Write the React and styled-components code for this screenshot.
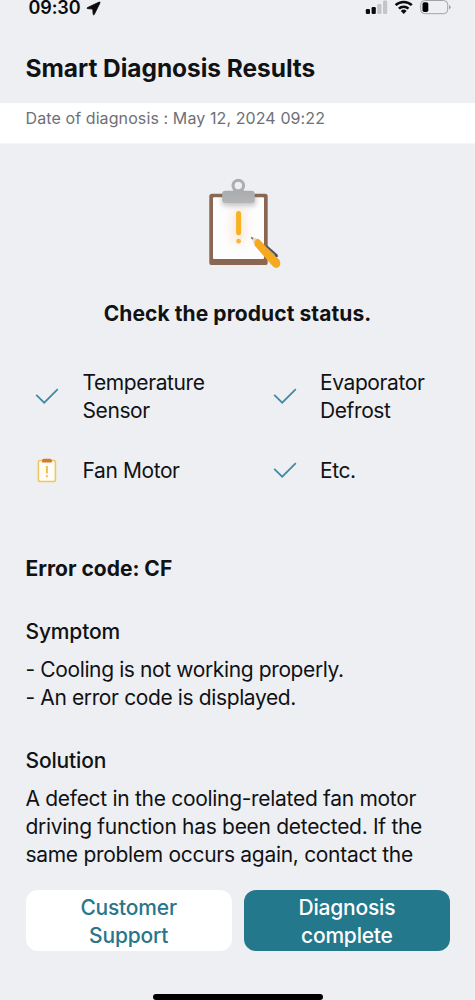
import React from "react";
import styled, { createGlobalStyle } from "styled-components";

const GlobalStyle = createGlobalStyle`
  *, *::before, *::after { box-sizing: border-box; }
  body {
    margin: 0;
    background: #eeeff3;
    font-family: Inter, "Liberation Sans", sans-serif;
    color: #111214;
  }
  h1, h2, h3, p { margin: 0; }
`;

const Screen = styled.div`
  display: flex;
  flex-direction: column;
  width: 475px;
  height: 1000px;
  overflow: hidden;
  background: #eeeff3;
`;

const StatusBar = styled.header`
  display: flex;
  align-items: flex-start;
  justify-content: space-between;
  flex: none;
  height: 53px;
  padding: 0 24px 0 28.5px;
`;

const Clock = styled.div`
  display: flex;
  align-items: center;
  gap: 6px;
  height: 16px;
  font-size: 18px;
  line-height: 16px;
  font-weight: 600;
  letter-spacing: -0.1px;
  color: #0b0b0c;
`;

const Indicators = styled.div`
  display: flex;
  height: 16px;
`;

const Title = styled.h1`
  flex: none;
  height: 50px;
  padding-left: 25.5px;
  font-size: 24.5px;
  line-height: 31px;
  font-weight: 700;
  letter-spacing: -0.05px;
  white-space: nowrap;
`;

const DateStrip = styled.p`
  flex: none;
  height: 41px;
  padding-left: 25.5px;
  background: #fff;
  border-bottom: 1px solid #f4f5f7;
  font-size: 16px;
  line-height: 30px;
  letter-spacing: 0.1px;
  color: #6d7077;
  white-space: nowrap;
`;

const Hero = styled.section`
  display: flex;
  flex-direction: column;
  align-items: center;
  flex: none;
  height: 224px;
  padding-top: 31px;
`;

const HeroTitle = styled.h2`
  margin-top: 29px;
  font-size: 21px;
  line-height: 28px;
  font-weight: 700;
  letter-spacing: 0.08px;
  white-space: nowrap;
`;

const CheckGrid = styled.ul`
  display: grid;
  grid-template-columns: 237.5px 200px;
  row-gap: 32px;
  flex: none;
  height: 187px;
  align-content: start;
  margin: 0;
  padding: 1px 0 0 33px;
  list-style: none;
`;

const CheckItem = styled.li`
  display: flex;
  align-items: center;
  gap: 21.5px;
`;

const BodyText = styled.p`
  font-size: 21px;
  line-height: 28px;
  letter-spacing: ${(p) => p.$track ?? -0.3}px;
  white-space: nowrap;
`;

const Details = styled.main`
  flex: none;
  height: 335px;
  padding-left: 25.5px;
`;

const ErrorCode = styled.h2`
  font-size: 21px;
  line-height: 28px;
  font-weight: 700;
  letter-spacing: 0;
`;

const Block = styled.section`
  margin-top: 35px;
`;

const BlockTitle = styled.h3`
  margin-bottom: 10px;
  font-size: 21px;
  line-height: 28px;
  font-weight: 500;
  letter-spacing: -0.15px;
`;

const Actions = styled.footer`
  display: grid;
  grid-template-columns: 1fr 1fr;
  gap: 12px;
  flex: none;
  height: 61px;
  margin: 0 25px 0 25.5px;
`;

const Button = styled.button`
  height: 61px;
  padding: 2px 0 0;
  border: 0;
  border-radius: 12px;
  background: ${(p) => (p.$primary ? "#23788c" : "#fff")};
  color: ${(p) => (p.$primary ? "#fff" : "#28768a")};
  font-family: inherit;
  font-size: 21px;
  line-height: 28px;
  font-weight: 500;
  letter-spacing: -0.2px;
`;

const HomeIndicator = styled.div`
  flex: none;
  width: 170px;
  height: 6.5px;
  margin: 42.5px 0 0 153px;
  border-radius: 4px;
  background: #000;
`;

const LocationArrow = () => (
  <svg width="15" height="15" viewBox="0 0 15 15">
    <path d="M13.2 1.1 1.3 6.7q-.7.5.1.9l5.4.4.4 5.4q.5.9 1 .1L14 1.8q.2-.9-.8-.7Z" fill="#0b0b0c" stroke="#0b0b0c" strokeWidth=".9" strokeLinejoin="round" />
  </svg>
);

const StatusIcons = () => (
  <svg width="86" height="16" viewBox="365 0 86 16">
    <rect x="365.8" y="9" width="4.2" height="5" rx="1.2" fill="#0b0b0c" />
    <rect x="371.6" y="7" width="4.2" height="7" rx="1.2" fill="#0b0b0c" />
    <rect x="377.3" y="4" width="4.2" height="10" rx="1.2" fill="#c4c5c9" />
    <rect x="383" y="0.6" width="4.2" height="13.4" rx="1.2" fill="#c4c5c9" />
    <g fill="none" stroke="#0b0b0c" strokeWidth="2.5">
      <path d="M395.6 5.2a11.6 11.6 0 0 1 16.2 0" />
      <path d="M398.9 8.7a6.8 6.8 0 0 1 9.6 0" />
    </g>
    <path d="M403.7 13.9 400.8 11a4.1 4.1 0 0 1 5.8 0Z" fill="#0b0b0c" />
    <rect x="420.7" y="0.5" width="27" height="13.2" rx="4" fill="none" stroke="#a1a2a6" />
    <rect x="422.5" y="2.3" width="5.8" height="9.8" rx="1.8" fill="#000" />
    <path d="M449.2 5v4.4q1.4-.7 1.4-2.2t-1.4-2.2Z" fill="#8f9095" />
  </svg>
);

const ClipboardArt = () => (
  <svg width="110" height="96" viewBox="183 175 110 96">
    <defs>
      <filter id="soft" x="-50%" y="-50%" width="200%" height="200%">
        <feGaussianBlur stdDeviation="2.5" />
      </filter>
      <filter id="glow" x="-300%" y="-50%" width="700%" height="200%">
        <feGaussianBlur stdDeviation="5" />
      </filter>
      <linearGradient id="clip" x1="0" y1="0" x2="0" y2="1">
        <stop offset="0" stopColor="#aaabad" />
        <stop offset="1" stopColor="#b4b5b7" />
      </linearGradient>
      <clipPath id="paper"><rect x="213" y="197" width="51" height="62" /></clipPath>
    </defs>
    <rect x="209.3" y="193.7" width="58.4" height="71.3" rx="2.6" fill="#8a6753" />
    <rect x="213" y="197.3" width="51" height="61.7" rx="1" fill="#fdfdfe" />
    <g clipPath="url(#paper)">
      <rect x="231" y="207" width="15" height="38" rx="7" fill="#f9dcc4" opacity=".5" filter="url(#glow)" />
      <rect x="222" y="195" width="34" height="11" rx="3" fill="#999" opacity=".55" filter="url(#soft)" />
    </g>
    <circle cx="238.3" cy="185.6" r="5.2" fill="none" stroke="#adaeb0" strokeWidth="3.3" />
    <path d="M233 188h10.6v5H233Z" fill="#adaeb0" />
    <circle cx="238.3" cy="185.6" r="3.6" fill="#eeeff3" />
    <rect x="222.2" y="190.8" width="32.5" height="12.2" rx="3" fill="url(#clip)" />
    <rect x="236.1" y="211" width="5" height="24.2" rx="2.5" fill="#f8b11f" />
    <circle cx="238.6" cy="241.2" r="2.4" fill="#f9b443" />
    <path d="M266.3 246 276.8 255.3" stroke="#505155" strokeWidth="2" fill="none" />
    <path d="m273 256.7 4.8-1" stroke="#505155" strokeWidth="2.4" fill="none" />
    <path d="M253.5 238.2 258.5 239.2 279.4 260.6Q281.6 264.5 278.7 266.9Q276 269.3 272.8 266.3L254.6 245.6Z" fill="#f6a91f" />
    <path d="M258.5 239.2 279.4 260.6" stroke="#dc9622" strokeWidth=".8" />
    <path d="m251.4 237.5 6.2 1.3q-3.2 1.2-3.6 5.1Z" fill="#ead9c7" />
    <path d="m250.8 237 2.8.8-1.6 2Z" fill="#5b5654" />
  </svg>
);

const CheckIcon = () => (
  <svg width="28" height="28" viewBox="0 0 28 28">
    <path d="m3.2 11.8 8 7.9L24.8 6.1" fill="none" stroke="#3b8ca2" strokeWidth="1.7" />
  </svg>
);

const WarningIcon = () => (
  <svg width="28" height="28" viewBox="0 0 28 28">
    <rect x="5.4" y="3.5" width="17" height="21" rx="1.8" fill="#fffdf6" stroke="#f2c65a" strokeWidth="1.6" />
    <path d="M9 5.6V3.6Q9 1.8 10.8 1.8h6.2q1.8 0 1.8 1.8v2Z" fill="#d27b2b" />
    <path d="M13.9 9v7.5M13.9 18.2v2" stroke="#efc04f" strokeWidth="2" />
  </svg>
);

const checks = [
  { lines: ["Temperature", "Sensor"], ok: true },
  { lines: ["Evaporator", "Defrost"], ok: true },
  { lines: ["Fan Motor"], ok: false },
  { lines: ["Etc."], ok: true },
];

const Lines = ({ items }) =>
  items.map((line, i) => (
    <React.Fragment key={line}>
      {i > 0 && <br />}
      {line}
    </React.Fragment>
  ));

export default function App() {
  return (
    <Screen>
      <GlobalStyle />
      <StatusBar>
        <Clock><span>09:30</span><LocationArrow /></Clock>
        <Indicators><StatusIcons /></Indicators>
      </StatusBar>
      <Title>Smart Diagnosis Results</Title>
      <DateStrip>Date of diagnosis : May 12, 2024 09:22</DateStrip>
      <Hero>
        <ClipboardArt />
        <HeroTitle>Check the product status.</HeroTitle>
      </Hero>
      <CheckGrid>
        {checks.map(({ lines, ok }) => (
          <CheckItem key={lines[0]}>
            {ok ? <CheckIcon /> : <WarningIcon />}
            <BodyText $track={-0.4}><Lines items={lines} /></BodyText>
          </CheckItem>
        ))}
      </CheckGrid>
      <Details>
        <ErrorCode>Error code: CF</ErrorCode>
        <Block>
          <BlockTitle>Symptom</BlockTitle>
          <BodyText $track={-0.38}>
            <Lines items={["- Cooling is not working properly.", "- An error code is displayed."]} />
          </BodyText>
        </Block>
        <Block>
          <BlockTitle>Solution</BlockTitle>
          <BodyText>
            <Lines items={["A defect in the cooling-related fan motor", "driving function has been detected. If the", "same problem occurs again, contact the"]} />
          </BodyText>
        </Block>
      </Details>
      <Actions>
        <Button><Lines items={["Customer", "Support"]} /></Button>
        <Button $primary><Lines items={["Diagnosis", "complete"]} /></Button>
      </Actions>
      <HomeIndicator />
    </Screen>
  );
}
